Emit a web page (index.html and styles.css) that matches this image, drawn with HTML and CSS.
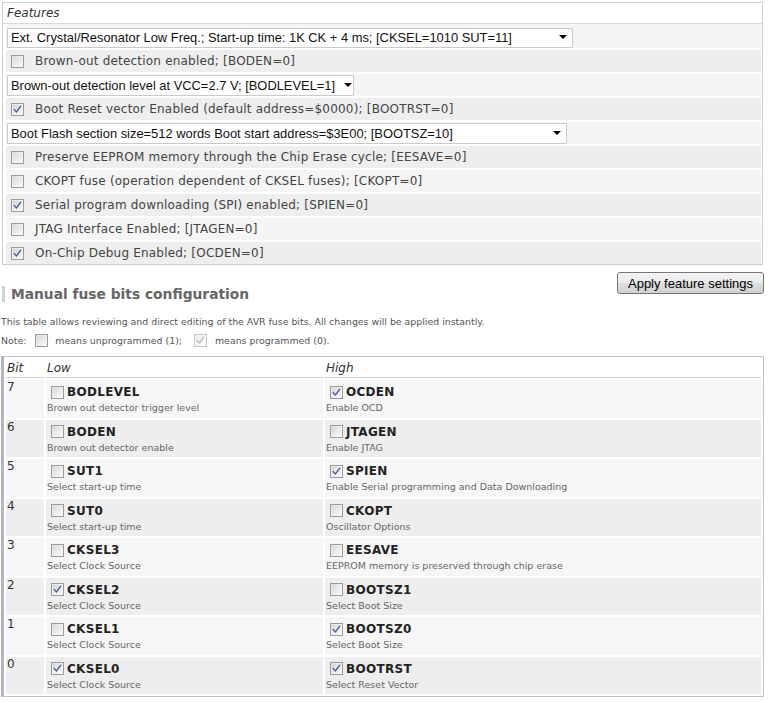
FILE: index.html
```html
<!DOCTYPE html>
<html>
<head>
<meta charset="utf-8">
<title>Fuse settings</title>
<link rel="stylesheet" href="styles.css">
</head>
<body>
<div class="page">
  <div class="features">
    <div class="features-head">Features</div>
    <div class="feature-rows">
      <div class="frow frow-first">
        <span class="sel sel-1"><select><option>Ext. Crystal/Resonator Low Freq.; Start-up time: 1K CK + 4 ms; [CKSEL=1010 SUT=11]</option></select></span>
      </div>
      <div class="frow alt">
        <span class="cb"></span><span class="flabel">Brown-out detection enabled; [BODEN=0]</span>
      </div>
      <div class="frow">
        <span class="sel sel-2"><select><option>Brown-out detection level at VCC=2.7 V; [BODLEVEL=1]</option></select></span>
      </div>
      <div class="frow alt">
        <span class="cb on"><svg viewBox="0 0 11 11"><path d="M2.3 5.6 L4.4 8 L8.6 2.4"/></svg></span><span class="flabel">Boot Reset vector Enabled (default address=$0000); [BOOTRST=0]</span>
      </div>
      <div class="frow">
        <span class="sel sel-3"><select><option>Boot Flash section size=512 words Boot start address=$3E00; [BOOTSZ=10]</option></select></span>
      </div>
      <div class="frow alt">
        <span class="cb"></span><span class="flabel">Preserve EEPROM memory through the Chip Erase cycle; [EESAVE=0]</span>
      </div>
      <div class="frow">
        <span class="cb"></span><span class="flabel">CKOPT fuse (operation dependent of CKSEL fuses); [CKOPT=0]</span>
      </div>
      <div class="frow alt">
        <span class="cb on"><svg viewBox="0 0 11 11"><path d="M2.3 5.6 L4.4 8 L8.6 2.4"/></svg></span><span class="flabel">Serial program downloading (SPI) enabled; [SPIEN=0]</span>
      </div>
      <div class="frow">
        <span class="cb"></span><span class="flabel">JTAG Interface Enabled; [JTAGEN=0]</span>
      </div>
      <div class="frow alt">
        <span class="cb on"><svg viewBox="0 0 11 11"><path d="M2.3 5.6 L4.4 8 L8.6 2.4"/></svg></span><span class="flabel">On-Chip Debug Enabled; [OCDEN=0]</span>
      </div>
    </div>
  </div>

  <div class="manual-bar">
    <h2 class="manual-title">Manual fuse bits configuration</h2>
    <button class="apply" type="button">Apply feature settings</button>
  </div>

  <p class="intro">This table allows reviewing and direct editing of the AVR fuse bits. All changes will be applied instantly.</p>
  <div class="note">
    <span>Note:</span>
    <span class="cb note-cb1"></span>
    <span>means unprogrammed (1);</span>
    <span class="cb on dis note-cb2"><svg viewBox="0 0 11 11"><path d="M2.3 5.6 L4.4 8 L8.6 2.4"/></svg></span>
    <span>means programmed (0).</span>
  </div>

  <table class="fuses">
    <thead>
      <tr><th class="c-bit">Bit</th><th class="c-low">Low</th><th class="c-high">High</th></tr>
    </thead>
    <tbody>
      <tr>
        <td class="bit">7</td>
        <td><div class="fname"><span class="cb"></span><b>BODLEVEL</b></div><div class="fdesc">Brown out detector trigger level</div></td>
        <td><div class="fname"><span class="cb on"><svg viewBox="0 0 11 11"><path d="M2.3 5.6 L4.4 8 L8.6 2.4"/></svg></span><b>OCDEN</b></div><div class="fdesc">Enable OCD</div></td>
      </tr>
      <tr class="alt">
        <td class="bit">6</td>
        <td><div class="fname"><span class="cb"></span><b>BODEN</b></div><div class="fdesc">Brown out detector enable</div></td>
        <td><div class="fname"><span class="cb"></span><b>JTAGEN</b></div><div class="fdesc">Enable JTAG</div></td>
      </tr>
      <tr>
        <td class="bit">5</td>
        <td><div class="fname"><span class="cb"></span><b>SUT1</b></div><div class="fdesc">Select start-up time</div></td>
        <td><div class="fname"><span class="cb on"><svg viewBox="0 0 11 11"><path d="M2.3 5.6 L4.4 8 L8.6 2.4"/></svg></span><b>SPIEN</b></div><div class="fdesc">Enable Serial programming and Data Downloading</div></td>
      </tr>
      <tr class="alt">
        <td class="bit">4</td>
        <td><div class="fname"><span class="cb"></span><b>SUT0</b></div><div class="fdesc">Select start-up time</div></td>
        <td><div class="fname"><span class="cb"></span><b>CKOPT</b></div><div class="fdesc">Oscillator Options</div></td>
      </tr>
      <tr>
        <td class="bit">3</td>
        <td><div class="fname"><span class="cb"></span><b>CKSEL3</b></div><div class="fdesc">Select Clock Source</div></td>
        <td><div class="fname"><span class="cb"></span><b>EESAVE</b></div><div class="fdesc">EEPROM memory is preserved through chip erase</div></td>
      </tr>
      <tr class="alt">
        <td class="bit">2</td>
        <td><div class="fname"><span class="cb on"><svg viewBox="0 0 11 11"><path d="M2.3 5.6 L4.4 8 L8.6 2.4"/></svg></span><b>CKSEL2</b></div><div class="fdesc">Select Clock Source</div></td>
        <td><div class="fname"><span class="cb"></span><b>BOOTSZ1</b></div><div class="fdesc">Select Boot Size</div></td>
      </tr>
      <tr>
        <td class="bit">1</td>
        <td><div class="fname"><span class="cb"></span><b>CKSEL1</b></div><div class="fdesc">Select Clock Source</div></td>
        <td><div class="fname"><span class="cb on"><svg viewBox="0 0 11 11"><path d="M2.3 5.6 L4.4 8 L8.6 2.4"/></svg></span><b>BOOTSZ0</b></div><div class="fdesc">Select Boot Size</div></td>
      </tr>
      <tr class="alt">
        <td class="bit">0</td>
        <td><div class="fname"><span class="cb on"><svg viewBox="0 0 11 11"><path d="M2.3 5.6 L4.4 8 L8.6 2.4"/></svg></span><b>CKSEL0</b></div><div class="fdesc">Select Clock Source</div></td>
        <td><div class="fname"><span class="cb on"><svg viewBox="0 0 11 11"><path d="M2.3 5.6 L4.4 8 L8.6 2.4"/></svg></span><b>BOOTRST</b></div><div class="fdesc">Select Reset Vector</div></td>
      </tr>
    </tbody>
  </table>
</div>
</body>
</html>
```
FILE: styles.css
```css
html, body {
  margin: 0;
  padding: 0;
  background: #ffffff;
}
body {
  font-family: "DejaVu Sans", Verdana, sans-serif;
  color: #333333;
}
.page {
  padding: 0 0 0 1px;
  width: 763px;
}

/* ---------- checkboxes ---------- */
.cb {
  display: inline-block;
  box-sizing: border-box;
  width: 13px;
  height: 13px;
  border: 1px solid #9a9a9a;
  background: linear-gradient(135deg, #d2d2d2 0%, #e8e8e8 45%, #fbfbfb 100%);
  box-shadow: inset 0 0 0 1px rgba(255,255,255,0.35);
  flex: none;
  position: relative;
}
.cb svg {
  display: block;
  width: 11px;
  height: 11px;
}
.cb svg path {
  fill: none;
  stroke: #4a5aa0;
  stroke-width: 1.4;
  stroke-linecap: square;
}
.cb.dis {
  border-color: #c4c4c4;
  background: linear-gradient(135deg, #ececec 0%, #f6f6f6 60%, #ffffff 100%);
}
.cb.dis svg path {
  stroke: #b4b8c8;
}

/* ---------- features box ---------- */
.features {
  margin: 2px 0 0 1px;
  width: 759px;
  border: 1px solid #c8d1d1;
}
.features-head {
  height: 20px;
  line-height: 20px;
  padding-left: 4px;
  font-size: 12px;
  font-style: italic;
  color: #333333;
  border-bottom: 1px solid #d6dcdc;
}
.feature-rows {
  display: flex;
  flex-direction: column;
  gap: 2px;
  padding: 0 1px 0 3px;
}
.frow {
  height: 22px;
  display: flex;
  align-items: center;
  background: #f5f5f5;
}
.frow.alt {
  background: #eeeeee;
}
.frow-first {
  height: 24px;
  align-items: flex-start;
}
.frow .cb {
  margin-left: 5px;
  margin-right: 11px;
}
.flabel {
  font-size: 12px;
  letter-spacing: 0.2px;
  color: #444444;
  white-space: nowrap;
}

/* selects */
.sel {
  position: relative;
  display: inline-block;
  margin-left: 1px;
  height: 21px;
}
.frow-first .sel {
  margin-top: 3px;
  height: 20px;
}
.sel select {
  -webkit-appearance: none;
  appearance: none;
  box-sizing: border-box;
  height: 100%;
  width: 100%;
  margin: 0;
  padding: 0 8px 0 3px;
  border: 1px solid #cacaca;
  border-radius: 1px;
  background: #ffffff;
  font-family: "Liberation Sans", Arial, sans-serif;
  font-size: 12.9px;
  color: #111111;
  outline: none;
}
.sel::after {
  content: "";
  position: absolute;
  right: 6px;
  top: 50%;
  margin-top: -2px;
  border-left: 4px solid transparent;
  border-right: 4px solid transparent;
  border-top: 4px solid #000000;
}
.sel-2::after {
  right: 2px;
}
.sel-1 { width: 566px; }
.sel-2 { width: 347px; }
.sel-3 { width: 560px; }

/* ---------- heading + button ---------- */
.manual-bar {
  display: flex;
  justify-content: space-between;
  align-items: flex-start;
  margin-top: 7px;
}
.manual-title {
  margin: 14px 0 0 1px;
  padding-left: 6px;
  border-left: 3px solid #d3d3d3;
  font-size: 13.8px;
  line-height: 16px;
  font-weight: bold;
  color: #666666;
}
.apply {
  box-sizing: border-box;
  width: 147px;
  height: 22px;
  margin: 0;
  padding: 0;
  border: 1px solid #767676;
  border-radius: 3px;
  background: linear-gradient(#f3f3f3 0%, #ebebeb 50%, #dddddd 51%, #d2d2d2 100%);
  font-family: "Liberation Sans", Arial, sans-serif;
  font-size: 13px;
  color: #000000;
}

/* ---------- intro text ---------- */
.intro {
  margin: 14px 0 0 0;
  font-size: 9.4px;
  line-height: 12px;
  color: #555555;
  white-space: nowrap;
}
.note {
  margin-top: 5px;
  height: 15px;
  display: flex;
  align-items: center;
  font-size: 9.4px;
  color: #555555;
  white-space: nowrap;
}
.note-cb1 {
  margin: 0 7px 0 9px;
}
.note-cb2 {
  margin: 0 8px 0 12px;
}

/* ---------- fuse table ---------- */
.fuses {
  margin-top: 8px;
  border-collapse: separate;
  border-spacing: 2px;
  table-layout: fixed;
  width: 763px;
  border: 1px solid #c2c2cc;
  border-left: 3px solid #b4b4c6;
}
.fuses th {
  box-sizing: border-box;
  height: 19px;
  padding: 0 1px;
  text-align: left;
  font-weight: normal;
  font-style: italic;
  font-size: 12px;
  line-height: 18px;
  color: #333333;
  border-bottom: 1px solid #cccccc;
}
.c-bit { width: 38px; }
.c-low { width: 277px; }
.c-high { width: 436px; }
.fuses td {
  box-sizing: border-box;
  height: 37.5px;
  padding: 4px 1px 0 1px;
  vertical-align: top;
  background: #f6f6f6;
}
.fuses tr.alt td {
  background: #eeeeee;
}
.fuses td.bit {
  padding-top: 0;
  font-size: 12px;
  line-height: 14px;
  color: #333333;
}
.fname {
  display: flex;
  align-items: center;
  height: 16px;
}
.fname .cb {
  margin: 0 3px 0 4px;
}
.fname b {
  font-size: 12px;
  font-weight: bold;
  letter-spacing: 0.3px;
  color: #222222;
  white-space: nowrap;
}
.fdesc {
  margin-top: 2px;
  font-size: 9.5px;
  line-height: 12px;
  color: #666666;
  white-space: nowrap;
}
```
